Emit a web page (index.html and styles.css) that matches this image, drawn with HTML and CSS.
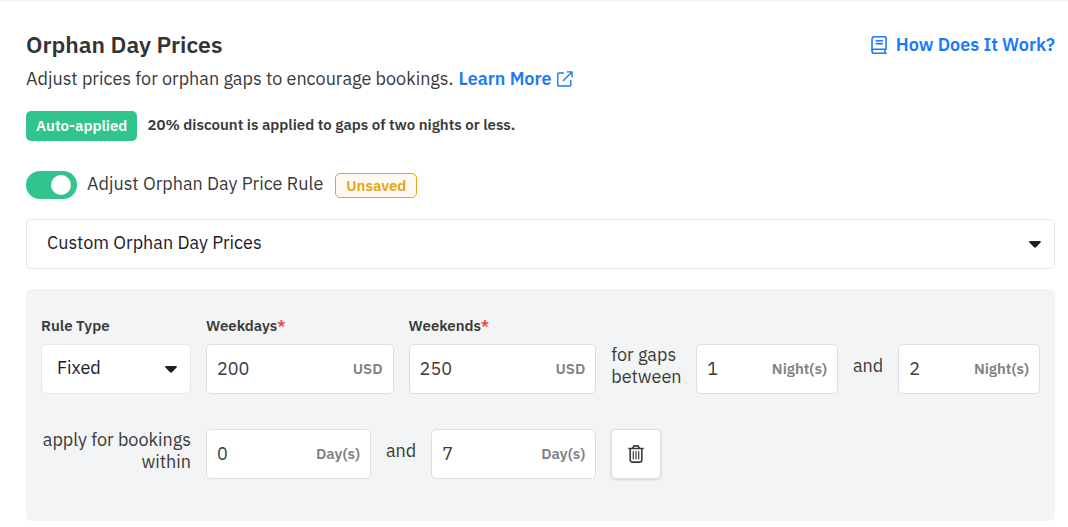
FILE: index.html
```html
<!DOCTYPE html>
<html lang="en">
<head>
  <meta charset="UTF-8" />
  <meta name="viewport" content="width=device-width, initial-scale=1.0"/>
  <title>Orphan Day Prices</title>
  <link rel="stylesheet" href="styles.css">
</head>
<body>
  <main class="settings">
    <header class="header">
      <h1>Orphan Day Prices</h1>
      <a href="#" class="link help-link">
        <svg width="16" height="18" viewBox="0 0 16 18" fill="none" stroke="currentColor" stroke-width="1.6" stroke-linecap="round" stroke-linejoin="round">
          <path d="M15 13.2H3a2 2 0 0 0 0 4h12M14 13.2v4M1 15.2V3.2A2.4 2.4 0 0 1 3.400.8H14a1.100 1.100 0 0 1 1.100 1.100v10.2a1.100 1.100 0 0 1-1.100 1.100"/>
          <path d="M5.200 4.800h6.200M5.200 7.600h6.200"/>
        </svg>
        How Does It Work?
      </a>
    </header>

    <p class="intro">
      Adjust prices for orphan gaps to encourage bookings.
      <a href="#" class="link">
        Learn More
        <svg width="16" height="16" viewBox="0 0 16 16" fill="none" stroke="currentColor" stroke-width="1.4" stroke-linecap="round" stroke-linejoin="round">
          <path d="M6.5 2H1.9a1.1 1.1 0 0 0-1.1 1.1v10.8A1.1 1.1 0 0 0 1.9 15h10.8a1.1 1.1 0 0 0 1.1-1.1V9.5M10.3.9h4.8v4.8M15 1 6.4 9.6"/>
        </svg>
      </a>
    </p>

    <div class="notice">
      <span class="badge">Auto-applied</span>
      <strong>20% discount is applied to gaps of two nights or less.</strong>
    </div>

    <div class="rule-toggle">
      <input type="checkbox" id="ruleToggle" class="switch" checked />
      <label for="ruleToggle">Adjust Orphan Day Price Rule</label>
      <span class="unsaved">Unsaved</span>
    </div>

    <div class="select select-wide">
      <select id="priceMode" aria-label="Orphan day price mode">
        <option>Custom Orphan Day Prices</option>
        <option>Default Orphan Day Prices</option>
      </select>
      <svg class="caret" width="12" height="7" viewBox="0 0 12 7" fill="currentColor"><path d="M1 0h10c.9 0 1.2.9.6 1.5L7 6.2q-1 .9-2 0L.4 1.5C-.2.9.1 0 1 0z"/></svg>
    </div>

    <form class="panel">
      <div class="row">
        <div class="field rule-type">
          <label for="ruleType">Rule Type</label>
          <div class="select">
            <select id="ruleType">
              <option>Fixed</option>
              <option>Percentage</option>
            </select>
            <svg class="caret" width="12" height="7" viewBox="0 0 12 7" fill="currentColor"><path d="M1 0h10c.9 0 1.2.9.6 1.5L7 6.2q-1 .9-2 0L.4 1.5C-.2.9.1 0 1 0z"/></svg>
          </div>
        </div>
        <div class="field price">
          <label for="weekdays">Weekdays<span class="required">*</span></label>
          <div class="input-group">
            <input type="text" id="weekdays" value="200" required />
            <span class="unit">USD</span>
          </div>
        </div>
        <div class="field price">
          <label for="weekends">Weekends<span class="required">*</span></label>
          <div class="input-group">
            <input type="text" id="weekends" value="250" required />
            <span class="unit">USD</span>
          </div>
        </div>
        <span class="row-text gaps-text">for gaps between</span>
        <div class="input-group nights">
          <input type="text" id="minNights" value="1" aria-label="Minimum gap" />
          <label class="unit" for="minNights">Night(s)</label>
        </div>
        <span class="row-text">and</span>
        <div class="input-group nights">
          <input type="text" id="maxNights" value="2" aria-label="Maximum gap" />
          <label class="unit" for="maxNights">Night(s)</label>
        </div>
      </div>

      <div class="row">
        <span class="row-text within-text">apply for bookings within</span>
        <div class="input-group days">
          <input type="text" id="minDays" value="0" aria-label="From day" />
          <label class="unit" for="minDays">Day(s)</label>
        </div>
        <span class="row-text">and</span>
        <div class="input-group days">
          <input type="text" id="maxDays" value="7" aria-label="To day" />
          <label class="unit" for="maxDays">Day(s)</label>
        </div>
        <button type="button" class="delete-btn" aria-label="Delete rule">
          <svg width="16" height="18" viewBox="0 0 16 18" fill="none" stroke="currentColor" stroke-width="1.6" stroke-linecap="round" stroke-linejoin="round">
            <path d="M1 3.5h14M4.7 3.3 5.3 1.8A1.6 1.6 0 0 1 6.7.9h2.6a1.6 1.6 0 0 1 1.4.9l.6 1.5M2.2 3.7V15a2.1 2.1 0 0 0 2.1 2.1h7.4a2.1 2.1 0 0 0 2.1-2.1V3.7"/>
            <path stroke-width="1.2" d="M5.3 6.5V14M8 6.5V14M10.7 6.5V14"/>
          </svg>
        </button>
      </div>
    </form>
  </main>
</body>
</html>
```

FILE: styles.css
```css
* {
  box-sizing: border-box;
}

body {
  font-family: "IBM Plex Sans", Roboto, sans-serif;
  font-size: 18px;
  line-height: 22px;
  margin: 0;
  color: #3a3a3a;
  background: #fff;
  border-top: 2px solid #f6f6f7;
}

input, select, button {
  font: inherit;
  color: inherit;
}

.settings {
  padding: 28px 13px 6px 26px;
}

.header {
  display: flex;
  justify-content: space-between;
  align-items: center;
}

h1 {
  margin: 0;
  padding-bottom: 2px;
  font-size: 23px;
  line-height: 28px;
  font-weight: 600;
  color: #333;
}

.link {
  display: inline-flex;
  align-items: center;
  gap: 5px;
  color: #1a7af8;
  font-weight: 600;
  text-decoration: none;
}

.help-link {
  gap: 9px;
}

.intro {
  display: flex;
  align-items: center;
  gap: 5px;
  margin: 8px 0 21px;
}

.notice {
  display: flex;
  align-items: center;
  gap: 10px;
  font-size: 15px;
}

.notice strong {
  padding-bottom: 2px;
  font-weight: 600;
}

.badge {
  padding: 4px 10px;
  border-radius: 5px;
  background: #32c48d;
  color: #fff;
  font-weight: 600;
}

.rule-toggle {
  display: flex;
  align-items: center;
  gap: 10px;
  margin: 30px 0 20px;
}

.rule-toggle label {
  padding-bottom: 2px;
}

.switch {
  appearance: none;
  display: flex;
  width: 51px;
  height: 28px;
  margin: 0;
  padding: 4px 6px;
  border-radius: 14px;
  background: #ccc;
  cursor: pointer;
}

.switch::before {
  content: "";
  width: 20px;
  height: 20px;
  border-radius: 50%;
  background: #fff;
}

.switch:checked {
  justify-content: flex-end;
  background: #32c48d;
}

.unsaved {
  margin-left: 2px;
  padding: 1px 10px;
  border: 1px solid #e5a413;
  border-radius: 5px;
  background: #fff9f2;
  color: #e5a413;
  font-size: 15px;
  line-height: 21px;
  font-weight: 600;
}

.select {
  display: grid;
  align-items: center;
  color: #1a202c;
}

.select select {
  grid-area: 1 / 1;
  appearance: none;
  width: 100%;
  height: 50px;
  padding: 0 34px 2px 15px;
  border: 1px solid #e2e8f0;
  border-radius: 5px;
  background: #fff;
}

.select .caret {
  grid-area: 1 / 1;
  justify-self: end;
  margin-right: 14px;
  pointer-events: none;
}

.select-wide select {
  padding-left: 20px;
}

.panel {
  display: flex;
  flex-direction: column;
  gap: 35px;
  margin-top: 20px;
  padding: 26px 15px 42px;
  border-radius: 6px;
  background: #f3f4f6;
}

.row {
  display: flex;
  align-items: flex-end;
  gap: 15px;
}

.field label {
  display: block;
  margin-bottom: 7px;
  font-size: 15px;
  font-weight: 600;
}

.required {
  color: #ef4444;
}

.rule-type {
  flex: none;
  width: 150px;
}

.price {
  flex: 1 1 188px;
  min-width: 0;
}

.nights {
  flex: 1 1 142px;
}

.days {
  width: 165px;
}

.input-group {
  display: flex;
  align-items: center;
  min-width: 0;
  height: 50px;
  padding: 0 10px;
  border: 1px solid #dedede;
  border-radius: 5px;
  background: #fff;
}

.input-group input {
  flex: 1;
  min-width: 0;
  width: 100%;
  padding: 0;
  border: none;
  outline: none;
  background: none;
}

.unit {
  padding-bottom: 1px;
  color: #808080;
  font-size: 15px;
  font-weight: 600;
}

.row-text {
  display: flex;
  flex: none;
  align-items: center;
  height: 50px;
  padding-bottom: 6px;
}

.gaps-text {
  width: 70px;
}

.within-text {
  width: 150px;
  text-align: right;
}

.delete-btn {
  display: flex;
  align-items: center;
  justify-content: center;
  width: 50px;
  height: 50px;
  padding: 0;
  border: 1px solid #dedede;
  border-radius: 5px;
  background: #fff;
  box-shadow: 0 1px 3px rgba(0, 0, 0, 0.12);
  cursor: pointer;
}
```
